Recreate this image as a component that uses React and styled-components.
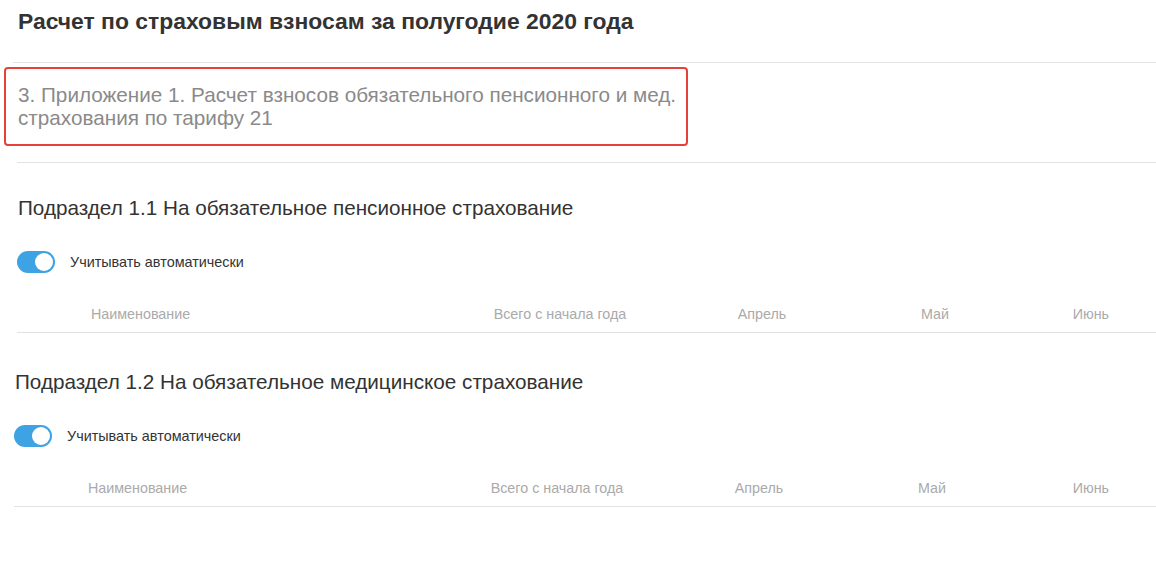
import React from 'react';
import styled, { createGlobalStyle } from 'styled-components';

const GlobalStyle = createGlobalStyle`
  html, body {
    margin: 0;
    padding: 0;
    background: #fff;
  }
  body {
    font-family: "Liberation Sans", Arial, sans-serif;
    color: #333;
  }
`;

const Page = styled.div`
  width: 1156px;
  height: 566px;
  overflow: hidden;
  background: #fff;
`;

const Title = styled.h1`
  margin: 0;
  padding: 8px 0 0 18px;
  height: 62px;
  box-sizing: border-box;
  font-size: 22.9px;
  line-height: 26px;
  font-weight: 700;
  color: #333;
`;

const Divider = styled.hr`
  margin: 0 0 0 ${p => p.$left || 13}px;
  border: none;
  border-top: 1px solid #e2e2e2;
  height: 0;
`;

const Highlight = styled.div`
  margin: 4px 0 16px 4px;
  width: 684px;
  height: 79px;
  box-sizing: border-box;
  border: 2px solid #e3413a;
  border-radius: 4px;
  padding: 14px 12px 0 12px;
  font-size: 20.7px;
  line-height: 23px;
  color: #8a8a8a;
  white-space: nowrap;
`;

const Section = styled.section`
  margin-left: ${p => p.$left}px;
  padding-top: ${p => p.$top}px;
`;

const SectionTitle = styled.h2`
  margin: 0 0 31px 1px;
  font-size: 20.7px;
  line-height: 24px;
  font-weight: 400;
  color: #333;
  white-space: nowrap;
`;

const ToggleRow = styled.label`
  display: flex;
  align-items: center;
  gap: 15px;
  height: 22px;
  font-size: 14.4px;
  color: #333;
`;

const Switch = styled.span`
  position: relative;
  width: 38px;
  height: 22px;
  border-radius: 11px;
  background: ${p => (p.$on ? '#3ea3e2' : '#ccc')};
  flex-shrink: 0;

  &::after {
    content: '';
    position: absolute;
    top: 2px;
    left: ${p => (p.$on ? '18px' : '2px')};
    width: 18px;
    height: 18px;
    border-radius: 50%;
    background: #fff;
  }
`;

const TableHead = styled.div`
  display: grid;
  grid-template-columns: 74px 369px 200px 204px 142px 1fr;
  margin-top: 33px;
  padding-bottom: 10px;
  border-bottom: 1px solid #e2e2e2;
  font-size: 14.3px;
  line-height: 16px;
  color: #aaa;
`;

const HeadCell = styled.div`
  text-align: ${p => p.$align || 'center'};
  padding-right: ${p => p.$pr || 0}px;
  white-space: nowrap;
`;

const columns = ['Всего с начала года', 'Апрель', 'Май'];

const SubSection = ({ left, top, title }) => (
  <Section $left={left} $top={top}>
    <SectionTitle>{title}</SectionTitle>
    <ToggleRow>
      <Switch $on />
      Учитывать автоматически
    </ToggleRow>
    <TableHead>
      <HeadCell />
      <HeadCell $align="left">Наименование</HeadCell>
      {columns.map(c => (
        <HeadCell key={c}>{c}</HeadCell>
      ))}
      <HeadCell $align="right" $pr={47}>Июнь</HeadCell>
    </TableHead>
  </Section>
);

export default function App() {
  return (
    <Page>
      <GlobalStyle />
      <Title>Расчет по страховым взносам за полугодие 2020 года</Title>
      <Divider />
      <Highlight>
        3. Приложение 1. Расчет взносов обязательного пенсионного и мед.
        <br />
        страхования по тарифу 21
      </Highlight>
      <Divider $left={17} />
      <SubSection left={17} top={33} title="Подраздел 1.1 На обязательное пенсионное страхование" />
      <SubSection left={14} top={37} title="Подраздел 1.2 На обязательное медицинское страхование" />
    </Page>
  );
}
